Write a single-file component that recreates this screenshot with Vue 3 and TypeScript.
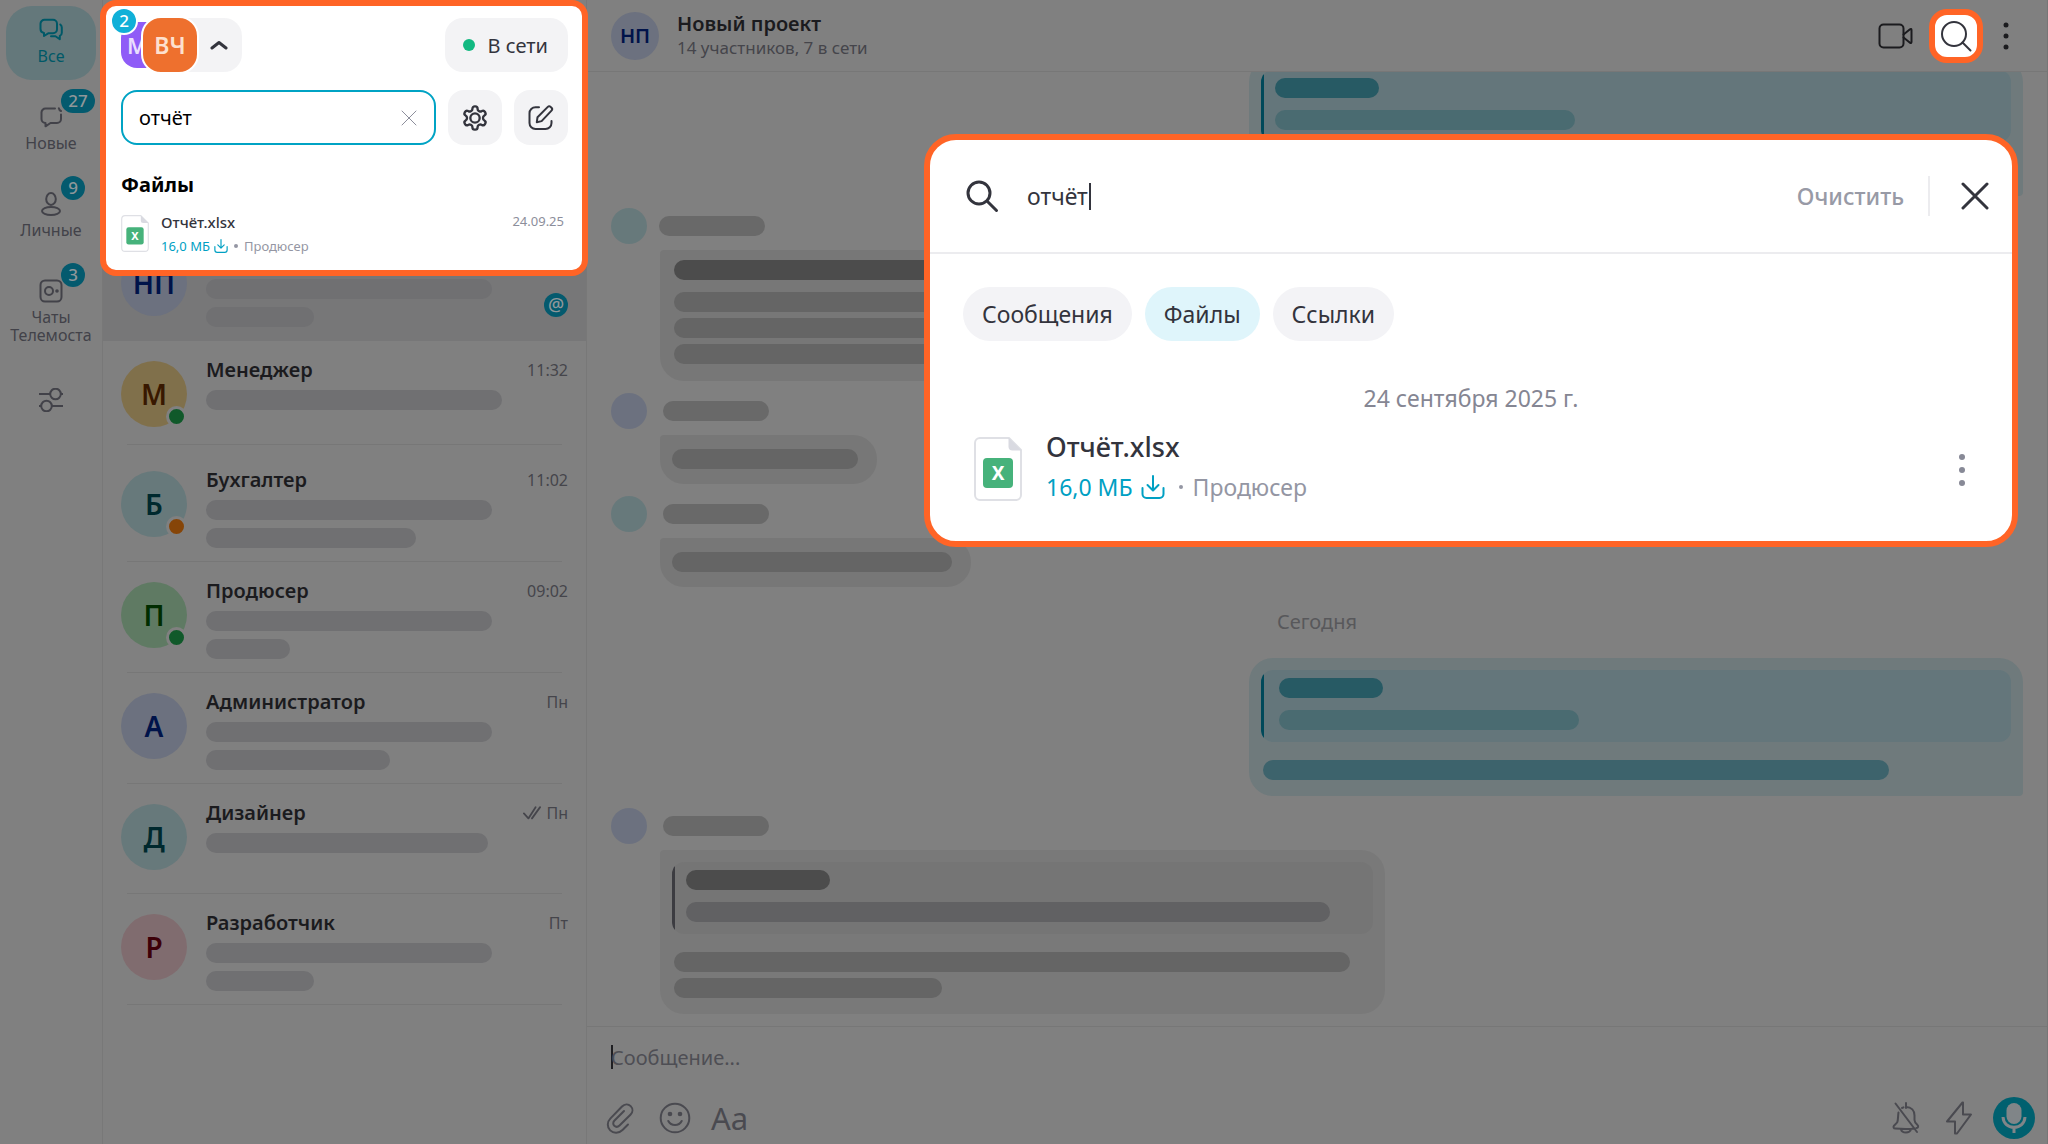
<script setup lang="ts">
import { ref } from 'vue'

type Tone = 'plain' | 'dark' | 'quoted' | 'teal-dark' | 'teal-soft' | 'teal-mid'

interface Bar {
  width: number
  tone: Tone
}

interface Message {
  id: number
  kind: 'in' | 'out' | 'day'
  label?: string
  avatar?: 'teal' | 'blue'
  shape?: 'text' | 'line' | 'reply'
  tight?: boolean
  width?: number
  quote?: Bar[]
  bars?: Bar[]
}

interface Chat {
  id: number
  name: string
  initials: string
  color: string
  time?: string
  status?: 'online' | 'busy'
  read?: boolean
  mention?: boolean
  bars: number[]
}

const query = ref('отчёт')
const chatQuery = ref('отчёт')
const draft = ref('')
const tabs = ['Сообщения', 'Файлы', 'Ссылки']
const activeTab = ref('Файлы')

const chats: Chat[] = [
  { id: 1, name: '', initials: 'НП', color: 'blue', mention: true, bars: [286, 108] },
  { id: 2, name: 'Менеджер', initials: 'М', color: 'yellow', time: '11:32', status: 'online', bars: [296] },
  { id: 3, name: 'Бухгалтер', initials: 'Б', color: 'teal', time: '11:02', status: 'busy', bars: [286, 210] },
  { id: 4, name: 'Продюсер', initials: 'П', color: 'green', time: '09:02', status: 'online', bars: [286, 84] },
  { id: 5, name: 'Администратор', initials: 'А', color: 'blue', time: 'Пн', bars: [286, 184] },
  { id: 6, name: 'Дизайнер', initials: 'Д', color: 'teal', time: 'Пн', read: true, bars: [282] },
  { id: 7, name: 'Разработчик', initials: 'Р', color: 'red', time: 'Пт', bars: [286, 108] },
]

const messages: Message[] = [
  {
    id: 1, kind: 'out', shape: 'reply', tight: true, width: 774,
    quote: [{ width: 104, tone: 'teal-dark' }, { width: 300, tone: 'teal-soft' }],
    bars: [{ width: 626, tone: 'teal-mid' }],
  },
  {
    id: 2, kind: 'in', avatar: 'teal', shape: 'text', tight: true, width: 725,
    bars: [
      { width: 380, tone: 'dark' }, { width: 676, tone: 'plain' },
      { width: 676, tone: 'plain' }, { width: 500, tone: 'plain' },
    ],
  },
  { id: 3, kind: 'in', avatar: 'blue', shape: 'line', width: 217, bars: [{ width: 186, tone: 'plain' }] },
  { id: 4, kind: 'in', avatar: 'teal', shape: 'line', width: 311, bars: [{ width: 280, tone: 'plain' }] },
  { id: 5, kind: 'day', label: 'Сегодня' },
  {
    id: 6, kind: 'out', shape: 'reply', width: 774,
    quote: [{ width: 104, tone: 'teal-dark' }, { width: 300, tone: 'teal-soft' }],
    bars: [{ width: 626, tone: 'teal-mid' }],
  },
  {
    id: 7, kind: 'in', avatar: 'blue', shape: 'reply', width: 725,
    quote: [{ width: 144, tone: 'dark' }, { width: 644, tone: 'quoted' }],
    bars: [{ width: 676, tone: 'plain' }, { width: 268, tone: 'plain' }],
  },
]
</script>

<template>
  <div class="app">
    <nav class="rail" aria-label="Разделы">
      <a class="rail-item active" href="#all">
        <svg class="i24" viewBox="0 0 24 24">
          <path d="M5.5 1.8H14a4 4 0 0 1 4 4v5.4a4 4 0 0 1-4 4H9.6L5 18v-3a4 4 0 0 1-3.500-3.900V5.800a4 4 0 0 1 4-4Z" />
          <path d="M21.300 6.500c.9.800 1.500 1.800 1.500 3v5.200c0 1.600-.8 2.700-2 3.200v3.400l-4.300-3H12" />
        </svg>
        <span>Все</span>
      </a>
      <a class="rail-item" href="#new">
        <svg class="i24" viewBox="0 0 24 24">
          <path d="M16 3.500H6.500a4 4 0 0 0-4 4V14a4 4 0 0 0 4 4v3.300L11.500 18H18a4 4 0 0 0 4-4V9.500" />
          <path d="M19.800 3.200c.3 1.400 1 2.300 2.200 2.800" />
        </svg>
        <span>Новые</span>
        <b class="badge wide">27</b>
      </a>
      <a class="rail-item" href="#personal">
        <svg class="i24" viewBox="0 0 24 24">
          <ellipse cx="12" cy="7" rx="4.800" ry="6" />
          <ellipse cx="12" cy="19" rx="9" ry="4" />
        </svg>
        <span>Личные</span>
        <b class="badge">9</b>
      </a>
      <a class="rail-item" href="#telemost">
        <svg class="i24" viewBox="0 0 24 24">
          <rect x="1.500" y="1.500" width="21" height="21" rx="4.500" />
          <circle cx="10" cy="12" r="4" />
          <circle class="solid" cx="18" cy="12" r="1.800" />
        </svg>
        <span>Чаты<br>Телемоста</span>
        <b class="badge">3</b>
      </a>
      <button class="rail-item tune" type="button" aria-label="Настроить разделы">
        <svg class="i24" viewBox="0 0 24 24">
          <path d="M0 6h11M22 6h2M0 18h2M13 18h11" />
          <circle cx="16.500" cy="6" r="5.300" />
          <circle cx="7.500" cy="18" r="5.300" />
        </svg>
      </button>
    </nav>

    <aside class="sidebar">
      <ul class="chats">
        <li v-for="(chat, i) in chats" :key="chat.id" class="chat" :class="{ selected: i === 0, short: chat.bars.length === 1 }">
          <span class="avatar" :class="chat.color">
            {{ chat.initials }}
            <i v-if="chat.status" class="status" :class="chat.status"></i>
          </span>
          <div class="chat-body">
            <div class="chat-top">
              <span class="chat-name">{{ chat.name }}</span>
              <span v-if="chat.time" class="chat-time">
                <svg v-if="chat.read" class="ticks" viewBox="0 0 20 16">
                  <path d="M1 8.500l5 5.500L14 1.500M10 14L19 1.500" />
                </svg>
                {{ chat.time }}
              </span>
            </div>
            <div class="chat-lines">
              <i v-for="(w, n) in chat.bars" :key="n" class="bar list" :style="{ width: w + 'px' }"></i>
            </div>
          </div>
          <b v-if="chat.mention" class="mention">@</b>
        </li>
      </ul>
    </aside>

    <main class="chat-pane">
      <header class="pane-head">
        <span class="avatar small blue">НП</span>
        <div class="pane-title">
          <h1>Новый проект</h1>
          <p>14 участников, 7 в сети</p>
        </div>
        <div class="pane-actions">
          <button type="button" class="act" aria-label="Видеозвонок">
            <svg width="36" height="26" viewBox="0 0 36 26">
              <rect x="1.500" y="1.500" width="24" height="23" rx="4" />
              <path d="M25.500 11.500L32 6.200c.8-.6 1.500-.2 1.500.7v12.200c0 .9-.7 1.300-1.500.7L25.500 14.500" />
            </svg>
          </button>
          <button type="button" class="act spot" aria-label="Поиск по чату">
            <svg width="32" height="32" viewBox="0 0 32 32">
              <circle cx="14" cy="14" r="12" />
              <path d="M22.500 22.500L30.500 30.500" />
            </svg>
          </button>
          <button type="button" class="act" aria-label="Меню чата">
            <svg width="8" height="30" viewBox="0 0 8 30">
              <circle class="solid" cx="4" cy="4" r="2.500" />
              <circle class="solid" cx="4" cy="15" r="2.500" />
              <circle class="solid" cx="4" cy="26" r="2.500" />
            </svg>
          </button>
        </div>
      </header>

      <section class="feed">
        <template v-for="m in messages" :key="m.id">
          <p v-if="m.kind === 'day'" class="day">{{ m.label }}</p>
          <article v-else class="msg" :class="[m.kind, { tight: m.tight }]">
            <div v-if="m.kind === 'in'" class="sender">
              <span class="face" :class="m.avatar"></span>
              <i class="bar name"></i>
            </div>
            <div class="bubble" :class="m.shape" :style="{ width: m.width + 'px' }">
              <div v-if="m.quote" class="quote">
                <i v-for="(b, n) in m.quote" :key="n" class="bar" :class="b.tone" :style="{ width: b.width + 'px' }"></i>
              </div>
              <div class="lines">
                <i v-for="(b, n) in m.bars" :key="n" class="bar" :class="b.tone" :style="{ width: b.width + 'px' }"></i>
              </div>
            </div>
          </article>
        </template>
      </section>

      <footer class="composer">
        <label class="draft">
          <i class="caret"></i>
          <input v-model="draft" type="text" placeholder="Сообщение..." aria-label="Сообщение">
        </label>
        <div class="tools">
          <button type="button" aria-label="Прикрепить файл">
            <svg width="30" height="32" viewBox="0 0 30 32">
              <path d="M23 22.500l-5.500 5.500c-3.600 3.600-9 3.600-12.300.4-3.300-3.300-3.200-8.500.3-12L17 4.500c2.600-2.600 6.300-2.700 8.700-.4 2.400 2.400 2.300 6.100-.3 8.700L14.500 23.500c-1.600 1.600-3.700 1.700-5.200.3-1.500-1.500-1.400-3.700.2-5.300L19 9" />
            </svg>
          </button>
          <button type="button" aria-label="Эмодзи">
            <svg width="32" height="32" viewBox="0 0 32 32">
              <circle cx="16" cy="16" r="14.300" />
              <circle class="solid" cx="11" cy="12" r="2.300" />
              <circle class="solid" cx="21" cy="12" r="2.300" />
              <path d="M9.300 19c1.400 2.700 3.800 4 6.700 4s5.300-1.300 6.700-4" />
            </svg>
          </button>
          <button type="button" class="format" aria-label="Форматирование">Aa</button>
          <span class="grow"></span>
          <button type="button" aria-label="Без звука">
            <svg width="30" height="34" viewBox="0 0 30 34">
              <path d="M15 2v5M15 6c5.500 0 8.500 3.600 8.500 8.500v4.500c0 2.200 1.200 3.500 3 5 1.300 1.100.6 3-1 2.900M11 7l1.500-.6M7.500 11.500c-.7 4-.2 7.500-1.300 9.900L3 24.700c-1 1.300-.4 2.800 1.200 2.800 7 .6 14 .7 19.500-.1M10 28.500c1.200 4 8.600 4 10 0M4.500 2.500L26 31" />
            </svg>
          </button>
          <button type="button" aria-label="Быстрые ответы">
            <svg width="28" height="34" viewBox="0 0 28 34">
              <path d="M17.500 1.500L2 20.500h8v12h2L26 13.500h-8v-12Z" />
            </svg>
          </button>
          <button type="button" class="mic" aria-label="Голосовое сообщение">
            <svg width="42" height="42" viewBox="0 0 42 42">
              <rect class="solid" x="13.500" y="6" width="15" height="21" rx="7.500" />
              <path class="stand" d="M10 20c.4 6.500 5 10.300 11 10.300S31.600 26.500 32 20M21 30.500V36" />
            </svg>
          </button>
        </div>
      </footer>
    </main>

    <section class="panel finder">
      <div class="finder-top">
        <button type="button" class="account" aria-label="Сменить аккаунт">
          <span class="org">М</span>
          <span class="me">ВЧ</span>
          <svg width="18" height="10" viewBox="0 0 18 10"><path d="M2 8L9 2.500 16 8" /></svg>
          <b class="count">2</b>
        </button>
        <button type="button" class="presence"><i></i>В сети</button>
      </div>
      <div class="finder-row">
        <label class="field">
          <input v-model="query" type="text" aria-label="Поиск">
          <button type="button" aria-label="Стереть">
            <svg width="16" height="16" viewBox="0 0 16 16"><path d="M1 1l14 14M15 1L1 15" /></svg>
          </button>
        </label>
        <button type="button" class="square" aria-label="Настройки">
          <svg width="28" height="28" viewBox="0 0 24 24">
            <path d="M12.220 2h-.44a2 2 0 0 0-2 2v.18a2 2 0 0 1-1 1.730l-.43.25a2 2 0 0 1-2 0l-.15-.08a2 2 0 0 0-2.730.73l-.22.38a2 2 0 0 0 .73 2.730l.15.1a2 2 0 0 1 1 1.720v.51a2 2 0 0 1-1 1.740l-.15.09a2 2 0 0 0-.73 2.730l.22.38a2 2 0 0 0 2.730.73l.15-.08a2 2 0 0 1 2 0l.43.25a2 2 0 0 1 1 1.730V20a2 2 0 0 0 2 2h.44a2 2 0 0 0 2-2v-.18a2 2 0 0 1 1-1.730l.43-.25a2 2 0 0 1 2 0l.15.08a2 2 0 0 0 2.730-.73l.22-.39a2 2 0 0 0-.73-2.730l-.15-.08a2 2 0 0 1-1-1.740v-.5a2 2 0 0 1 1-1.740l.15-.09a2 2 0 0 0 .73-2.730l-.22-.38a2 2 0 0 0-2.730-.73l-.15.08a2 2 0 0 1-2 0l-.43-.25a2 2 0 0 1-1-1.730V4a2 2 0 0 0-2-2z" />
            <circle cx="12" cy="12" r="4" />
          </svg>
        </button>
        <button type="button" class="square" aria-label="Новый чат">
          <svg width="28" height="28" viewBox="0 0 28 28">
            <path d="M12 3.200H8.500a6 6 0 0 0-6 6V19a6 6 0 0 0 6 6h10a6 6 0 0 0 6-6v-2" />
            <path d="M9.800 18.200l.7-5L20.800 2.900c.8-.8 2-.8 2.800 0l.9.900c.8.8.8 2 0 2.800L14.600 17.100l-4.800 1.100Z" />
          </svg>
        </button>
      </div>
      <h2>Файлы</h2>
      <div class="file">
        <svg class="doc" width="28" height="37" viewBox="0 0 48 64">
          <path class="sheet" d="M7 1h27l13 13v43a6 6 0 0 1-6 6H7a6 6 0 0 1-6-6V7a6 6 0 0 1 6-6Z" />
          <path class="fold" d="M34 .5L47.500 14H38a4 4 0 0 1-4-4Z" />
          <rect class="mark" x="9" y="21" width="30" height="30" rx="4" />
          <text x="24" y="43">X</text>
        </svg>
        <div class="file-body">
          <strong>Отчёт.xlsx</strong>
          <p>
            <a href="#download">16,0 МБ
              <svg width="14" height="14" viewBox="0 0 24 24"><path d="M12 1v14M6.500 10l5.500 5.500 5.500-5.500M1.500 13v6a4 4 0 0 0 4 4h13a4 4 0 0 0 4-4v-6" /></svg>
            </a>
            <i></i>
            <span>Продюсер</span>
          </p>
        </div>
        <time datetime="2025-09-24">24.09.25</time>
      </div>
    </section>

    <section class="panel dialog">
      <div class="dialog-head">
        <svg width="34" height="34" viewBox="0 0 34 34">
          <circle cx="14" cy="14" r="11" />
          <path d="M22.500 22.500l9 9" />
        </svg>
        <label class="dialog-query">
          <input v-model="chatQuery" type="text" size="4" aria-label="Поиск по чату">
          <i class="caret"></i>
        </label>
        <button type="button" class="clear">Очистить</button>
        <button type="button" class="close" aria-label="Закрыть">
          <svg width="28" height="28" viewBox="0 0 28 28"><path d="M2 2l24 24M26 2L2 26" /></svg>
        </button>
      </div>
      <div class="dialog-body">
        <div class="chips">
          <button v-for="t in tabs" :key="t" type="button" :class="{ on: t === activeTab }" @click="activeTab = t">{{ t }}</button>
        </div>
        <p class="date">24 сентября 2025 г.</p>
        <div class="file big">
          <svg class="doc" width="48" height="64" viewBox="0 0 48 64">
            <path class="sheet" d="M6 1h29l12 12v45a5 5 0 0 1-5 5H6a5 5 0 0 1-5-5V6a5 5 0 0 1 5-5Z" />
            <path class="fold" d="M34.500 .5L47.500 13.500H38.500a4 4 0 0 1-4-4Z" />
            <rect class="mark" x="9" y="21" width="30" height="30" rx="4" />
            <text x="24" y="43">X</text>
          </svg>
          <div class="file-body">
            <strong>Отчёт.xlsx</strong>
            <p>
              <a href="#download">16,0 МБ
                <svg width="24" height="24" viewBox="0 0 24 24"><path d="M12 1v14M6.500 10l5.500 5.500 5.500-5.500M1.500 13v6a4 4 0 0 0 4 4h13a4 4 0 0 0 4-4v-6" /></svg>
              </a>
              <i></i>
              <span>Продюсер</span>
            </p>
          </div>
          <button type="button" class="more" aria-label="Действия с файлом">
            <svg width="8" height="34" viewBox="0 0 8 34">
              <circle class="solid" cx="4" cy="4" r="3" />
              <circle class="solid" cx="4" cy="17" r="3" />
              <circle class="solid" cx="4" cy="30" r="3" />
            </svg>
          </button>
        </div>
      </div>
    </section>
  </div>
</template>

<style>
body {
  background: #808080;
}
</style>

<style scoped>
.app {
  position: relative;
  display: grid;
  grid-template-columns: 103px 484px 1fr;
  min-height: 100vh;
  background: #808080;
  color: #1b1b1e;
  font-family: "Noto Sans", "Liberation Sans", sans-serif;
}
.app * {
  box-sizing: border-box;
}
button {
  margin: 0;
  padding: 0;
  border: 0;
  background: none;
  color: inherit;
  font: inherit;
}
input {
  min-width: 0;
  padding: 0;
  border: 0;
  outline: 0;
  background: none;
  color: inherit;
  font: inherit;
}
h1, h2, p, ul {
  margin: 0;
  padding: 0;
}
a {
  color: inherit;
  text-decoration: none;
}
svg {
  display: block;
  flex: none;
  fill: none;
  stroke: currentColor;
  stroke-width: 2;
  stroke-linejoin: round;
  stroke-linecap: round;
}
svg .solid {
  fill: currentColor;
  stroke: none;
}

/* Rail */
.rail {
  display: flex;
  flex-direction: column;
  gap: 13px;
  padding: 6px;
  border-right: 1px solid #787878;
}
.rail-item {
  position: relative;
  display: flex;
  flex-direction: column;
  align-items: center;
  gap: 5px;
  width: 90px;
  padding: 12px 0 15px;
  color: #424249;
  font-size: 16px;
  line-height: 18px;
  text-align: center;
}
.rail-item.active {
  border-radius: 26px;
  background: #64787b;
  color: #005867;
}
.rail-item.tune {
  margin-top: 4px;
}
.i24 {
  width: 24px;
  height: 24px;
}
.badge {
  position: absolute;
  top: -4px;
  left: 55px;
  min-width: 24px;
  height: 24px;
  border-radius: 12px;
  background: #045a6e;
  color: #8f979a;
  font-size: 17px;
  font-weight: 500;
  line-height: 24px;
}
.badge.wide {
  width: 34px;
}

/* Chat list */
.sidebar {
  padding-top: 230px;
  border-right: 1px solid #787878;
}
.chats {
  list-style: none;
}
.chat {
  position: relative;
  display: flex;
  gap: 19px;
  height: 111px;
  padding: 17px 18px 0;
}
.chat.short {
  height: 110px;
}
.chat::after {
  content: "";
  position: absolute;
  right: 24px;
  bottom: 0;
  left: 24px;
  height: 1px;
  background: #777;
}
.chat.selected {
  background: #777778;
}
.chat.selected::after {
  display: none;
}
.chat.selected + .chat::after {
  bottom: 6px;
}
.avatar {
  position: relative;
  display: flex;
  flex: none;
  align-items: center;
  justify-content: center;
  width: 66px;
  height: 66px;
  margin-top: 3px;
  border-radius: 50%;
  font-size: 28px;
  font-weight: 600;
}
.avatar.small {
  width: 48px;
  height: 48px;
  margin: 0;
  font-size: 20px;
}
.blue { background: #6c717f; color: #00134a; }
.yellow { background: #80704b; color: #381800; }
.teal { background: #67797b; color: #00292e; }
.green { background: #5f7a63; color: #002d00; }
.red { background: #806c6f; color: #3d0008; }
.status {
  position: absolute;
  right: 0;
  bottom: 0;
  width: 21px;
  height: 21px;
  border: 3px solid #808080;
  border-radius: 50%;
}
.status.online { background: #10592a; }
.status.busy { background: #864508; }
.chat-body {
  flex: 1;
}
.chat-top {
  display: flex;
  justify-content: space-between;
  height: 24px;
  line-height: 24px;
}
.chat-name {
  font-size: 20px;
  font-weight: 600;
}
.chat-time {
  display: flex;
  align-items: center;
  gap: 5px;
  color: #45454b;
  font-size: 16px;
}
.ticks {
  width: 18px;
  height: 16px;
}
.chat-lines {
  display: flex;
  flex-direction: column;
  gap: 8px;
  margin-top: 8px;
}
.bar {
  display: block;
  height: 20px;
  border-radius: 10px;
  max-width: 100%;
}
.bar.list { background: #707072; }
.bar.name { width: 106px; background: #696969; }
.bar.plain { background: #656565; }
.bar.dark { background: #4c4c4c; }
.bar.quoted { background: #616163; }
.bar.teal-dark { background: #275a64; }
.bar.teal-soft { background: #4a6b71; }
.bar.teal-mid { background: #3d636c; }
.mention {
  position: absolute;
  right: 18px;
  bottom: 24px;
  width: 24px;
  height: 24px;
  border-radius: 50%;
  background: #045a6e;
  color: #8f979a;
  font-size: 18px;
  font-weight: 500;
  line-height: 22px;
  text-align: center;
}

/* Conversation */
.chat-pane {
  display: flex;
  flex-direction: column;
  min-width: 0;
  height: 100vh;
  border-right: 1px solid #767676;
}
.pane-head {
  display: flex;
  flex: none;
  align-items: center;
  gap: 18px;
  height: 72px;
  padding: 0 37px 0 24px;
  border-bottom: 1px solid #777;
}
.pane-title {
  flex: 1;
}
h1 {
  font-size: 20px;
  font-weight: 600;
  line-height: 25px;
}
.pane-title p {
  color: #45454b;
  font-size: 17px;
  line-height: 24px;
}
.pane-actions {
  display: flex;
  align-items: center;
  gap: 15px;
}
.act {
  display: flex;
  align-items: center;
  justify-content: center;
}
.act:last-child {
  margin-left: 4px;
}
.act.spot {
  width: 54px;
  height: 54px;
  border: 6px solid #ff6426;
  border-radius: 18px;
  background: #fff;
  color: #33343d;
}
.feed {
  display: flex;
  flex: 1;
  flex-direction: column;
  justify-content: flex-end;
  gap: 12px;
  min-height: 0;
  padding: 0 24px 12px;
  overflow: hidden;
}
.msg {
  display: flex;
  flex: none;
  flex-direction: column;
  gap: 6px;
}
.msg.out {
  align-items: flex-end;
}
.day {
  flex: none;
  height: 47px;
  color: #58585b;
  font-size: 20px;
  line-height: 46px;
  text-align: center;
}
.sender {
  display: flex;
  align-items: center;
  gap: 16px;
}
.tight .sender {
  gap: 12px;
}
.face {
  width: 36px;
  height: 36px;
  border-radius: 50%;
}
.bubble {
  max-width: 100%;
  border-radius: 24px;
}
.in .bubble {
  margin-left: 49px;
  border-top-left-radius: 4px;
  background: #777;
}
.in .bubble.reply {
  background: #797979;
}
.out .bubble {
  border-bottom-right-radius: 4px;
  background: #6f7a7c;
}
.lines {
  display: flex;
  flex-direction: column;
  gap: 6px;
}
.text {
  padding: 10px 14px 17px;
}
.text .bar:first-child {
  margin-bottom: 6px;
}
.line {
  padding: 14px 12px 15px;
}
.reply {
  padding: 12px 12px 16px;
}
.quote {
  display: flex;
  flex-direction: column;
  gap: 12px;
  height: 72px;
  padding: 8px 14px;
  border-radius: 12px;
  background: linear-gradient(90deg, #3c3c41 3px, #757575 3px);
}
.out .quote {
  padding-left: 18px;
  background: linear-gradient(90deg, #00495a 3px, #64767b 3px);
}
.out.tight .quote {
  padding-left: 14px;
}
.reply .lines {
  margin: 18px 0 0 2px;
}
.composer {
  flex: none;
  padding: 17px 12px 5px 24px;
  border-top: 1px solid #777;
}
.draft {
  display: flex;
  align-items: center;
  height: 26px;
  color: #4e4e54;
  font-size: 20px;
}
.draft input {
  flex: 1;
}
.draft input::placeholder {
  color: #4e4e54;
  opacity: 1;
}
.caret {
  width: 2px;
  height: 24px;
  margin-right: -2px;
  background: #1f1f22;
}
.tools {
  display: flex;
  align-items: center;
  gap: 24px;
  height: 42px;
  margin: 27px 0 0 -6px;
  color: #4a4a50;
}
.format {
  margin-left: -4px;
  font-size: 31px;
  line-height: 42px;
}
.grow {
  flex: 1;
}
.mic {
  width: 42px;
  height: 42px;
  margin-left: -4px;
  border-radius: 50%;
  background: #00606f;
  color: #808588;
}
.stand {
  stroke-linecap: butt;
  stroke-width: 3;
}

/* Highlighted panels */
.panel {
  position: absolute;
  border: 6px solid #ff6426;
  background: #fff;
  color: #33343d;
}
.finder {
  top: 0;
  left: 100px;
  width: 488px;
  padding: 12px 14px 11px 15px;
  border-radius: 16px;
}
.finder-top {
  display: flex;
  justify-content: space-between;
}
.account {
  position: relative;
  display: flex;
  align-items: center;
  width: 121px;
  height: 54px;
  border-radius: 18px;
  background: linear-gradient(90deg, #fff 40px, #f3f3f5 40px);
}
.org {
  display: flex;
  align-items: center;
  width: 46px;
  height: 46px;
  padding-left: 6px;
  border-radius: 16px;
  background: #8f5cf7;
  color: #e9defd;
  font-size: 22px;
  font-weight: 600;
}
.me {
  flex: none;
  width: 58px;
  height: 58px;
  margin: 0 11px 0 -26px;
  border: 2px solid #fff;
  border-radius: 20px;
  background: #ee702e;
  color: #fde0cf;
  font-size: 23px;
  font-weight: 600;
  line-height: 54px;
}
.account svg {
  stroke-width: 3;
}
.count {
  position: absolute;
  top: -11px;
  left: -11px;
  width: 28px;
  height: 28px;
  border: 2px solid #fff;
  border-radius: 50%;
  background: #10b0d8;
  color: #fff;
  font-size: 17px;
  font-weight: 500;
  line-height: 24px;
}
.presence {
  display: flex;
  align-items: center;
  gap: 13px;
  height: 54px;
  padding: 0 20px 0 18px;
  border-radius: 18px;
  background: #f3f3f5;
  font-size: 20px;
}
.presence i {
  width: 12px;
  height: 12px;
  border-radius: 50%;
  background: #12b981;
}
.finder-row {
  display: flex;
  gap: 12px;
  margin-top: 18px;
}
.field {
  display: flex;
  flex: 1;
  align-items: center;
  min-width: 0;
  height: 55px;
  padding: 0 17px 0 16px;
  border: 2px solid #00a3c4;
  border-radius: 16px;
  color: #000;
  font-size: 20px;
}
.field input {
  flex: 1;
}
.field button {
  color: #8c8e9b;
}
.field svg {
  stroke-width: 1;
}
.square {
  display: flex;
  flex: none;
  align-items: center;
  justify-content: center;
  width: 54px;
  height: 55px;
  border-radius: 16px;
  background: #f3f3f5;
}
h2 {
  margin-top: 26px;
  color: #000;
  font-size: 20px;
  font-weight: 700;
  line-height: 28px;
}
.file {
  display: flex;
  align-items: flex-start;
  gap: 12px;
  margin-top: 12px;
}
.doc {
  margin-top: 4px;
}
.doc .sheet {
  fill: #fff;
  stroke: #dfe0e5;
}
.doc .fold {
  fill: #d9dae1;
  stroke: none;
}
.doc .mark {
  fill: #46b27b;
  stroke: none;
}
.doc text {
  fill: #fff;
  stroke: none;
  font-size: 19px;
  font-weight: 700;
  text-anchor: middle;
}
.file-body {
  flex: 1;
}
.file strong {
  display: block;
  font-size: 15px;
  font-weight: 500;
  line-height: 22px;
}
.file p {
  display: flex;
  align-items: center;
  gap: 6px;
  height: 26px;
  color: #9496a3;
  font-size: 13px;
}
.file p a {
  display: flex;
  align-items: center;
  gap: 4px;
  color: #00a0c3;
}
.file p i {
  width: 4px;
  height: 4px;
  border-radius: 50%;
  background: #9496a3;
}
.file time {
  margin-right: 4px;
  color: #8c8e9b;
  font-size: 13px;
  line-height: 20px;
}

.dialog {
  top: 134px;
  right: 30px;
  width: 1094px;
  border-radius: 32px;
}
.dialog-head {
  display: flex;
  align-items: center;
  height: 114px;
  padding: 0 23px 0 35px;
  border-bottom: 2px solid #ececef;
}
.dialog-head > svg {
  stroke-width: 3;
}
.dialog-query {
  display: flex;
  flex: 1;
  align-items: center;
  margin-left: 28px;
  font-size: 23px;
}
.dialog-query input {
  field-sizing: content;
}
.dialog-query .caret {
  height: 27px;
  margin-left: 1px;
  background: #33343d;
}
.clear {
  height: 40px;
  padding-right: 24px;
  border-right: 2px solid #ececef;
  color: #989aa6;
  font-size: 23px;
  font-weight: 500;
}
.close {
  margin-left: 31px;
}
.close svg {
  stroke-width: 3;
}
.dialog-body {
  padding: 33px 33px 34px;
}
.chips {
  display: flex;
  gap: 13px;
}
.chips button {
  height: 54px;
  padding: 0 19px;
  border-radius: 27px;
  background: #f3f3f6;
  font-size: 23px;
  line-height: 52px;
}
.chips .on {
  background: #dff5fb;
}
.date {
  margin-top: 40px;
  color: #858693;
  font-size: 23px;
  line-height: 34px;
  text-align: center;
}
.file.big {
  gap: 24px;
  margin-top: 12px;
  padding-left: 11px;
}
.big .doc {
  margin-top: 10px;
}
.big strong {
  font-size: 27px;
  line-height: 40px;
}
.big p {
  gap: 10px;
  height: 40px;
  font-size: 23px;
}
.big p a {
  gap: 8px;
}
.big p i {
  margin-left: 4px;
}
.more {
  margin: 26px 13px 0 0;
  color: #878996;
}
</style>
